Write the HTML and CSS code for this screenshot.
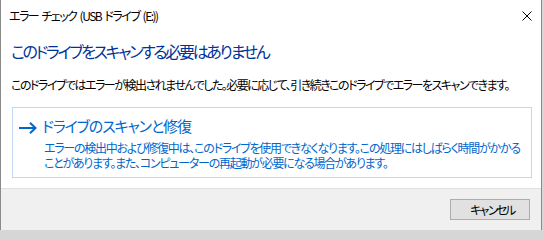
FILE: index.html
```html
<!DOCTYPE html>
<html lang="ja">
<head>
<meta charset="utf-8">
<title>エラー チェック</title>
<link rel="stylesheet" href="styles.css">
</head>
<body>
<div class="window">
  <div class="titlebar">
    <span class="title">エラー チェック (USB ドライブ (E:))</span>
    <svg class="close" width="10" height="10" viewBox="0 0 10 10"><path d="M0.5 0.5 L9.5 9.5 M9.5 0.5 L0.5 9.5" stroke="#000" stroke-width="1" fill="none"/></svg>
  </div>
  <div class="content">
    <h1 class="instruction">このドライブをスキャンする必要はありません</h1>
    <p class="message">このドライブではエラーが検出されませんでした。必要に応じて、引き続きこのドライブでエラーをスキャンできます。</p>
    <div class="command-link">
      <svg class="arrow" width="18" height="12" viewBox="0 0 18 12"><path d="M0 6 H16.5 M11 0.8 L16.5 6 L11 11.2" stroke="#0066cc" stroke-width="2" fill="none"/></svg>
      <div class="cl-text">
        <div class="cl-title">ドライブのスキャンと修復</div>
        <div class="cl-desc">エラーの検出中および修復中は、このドライブを使用できなくなります。この処理にはしばらく時間がかかる<br>ことがあります。また、コンピューターの再起動が必要になる場合があります。</div>
      </div>
    </div>
  </div>
  <div class="footer">
    <button class="btn">キャンセル</button>
  </div>
</div>
</body>
</html>
```

FILE: styles.css
```css
html, body {
  margin: 0;
  padding: 0;
}
body {
  width: 544px;
  height: 230px;
  background: #d6d6d6;
  font-family: "Noto Sans CJK JP", "Noto Sans", sans-serif;
  font-feature-settings: "palt";
  overflow: hidden;
}
.window {
  width: 542px;
  height: 230px;
  box-sizing: border-box;
  border-left: 1px solid #8a8a8a;
  border-right: 1px solid #8a8a8a;
  background: #ffffff;
  display: flex;
  flex-direction: column;
}
.titlebar {
  height: 30px;
  display: flex;
  align-items: center;
  justify-content: space-between;
  padding: 0 9px 0 8px;
}
.title {
  font-size: 12px;
  line-height: 29px;
  letter-spacing: -1.5px;
  word-spacing: 2px;
  white-space: nowrap;
  color: #000;
}
.close {
  display: block;
  margin-top: 1px;
}
.content {
  flex: 1;
  padding: 10px 9px 0 10px;
}
.instruction {
  margin: 0;
  font-size: 16px;
  line-height: 22px;
  letter-spacing: -2.3px;
  font-weight: normal;
  white-space: nowrap;
  color: #003399;
}
.message {
  margin: 15px 0 0 0;
  font-size: 12px;
  line-height: 16px;
  letter-spacing: -1.5px;
  white-space: nowrap;
  color: #000;
}
.command-link {
  margin: 14px 0 0 1px;
  border: 1px solid #bfdaf1;
  padding: 8px 0 7px 6px;
  display: flex;
  align-items: flex-start;
  gap: 5px;
  color: #0066cc;
}
.arrow {
  display: block;
  margin-top: 6px;
  flex: none;
}
.cl-title {
  font-size: 15px;
  line-height: 20px;
  letter-spacing: -1.1px;
  white-space: nowrap;
}
.cl-desc {
  margin-top: 4px;
  margin-left: 2px;
  font-size: 12px;
  line-height: 15px;
  letter-spacing: -1.25px;
  white-space: nowrap;
}
.footer {
  height: 42px;
  box-sizing: border-box;
  border-top: 1px solid #dfdfdf;
  background: #f0f0f0;
  display: flex;
  justify-content: flex-end;
  align-items: flex-start;
  padding: 10px 11px 0 0;
}
.btn {
  width: 80px;
  height: 21px;
  box-sizing: border-box;
  border: 1px solid #adadad;
  background: #e1e1e1;
  font-family: inherit;
  font-size: 12px;
  line-height: 19px;
  letter-spacing: -3.3px;
  padding: 0 0 0 3px;
  color: #000;
}
```
